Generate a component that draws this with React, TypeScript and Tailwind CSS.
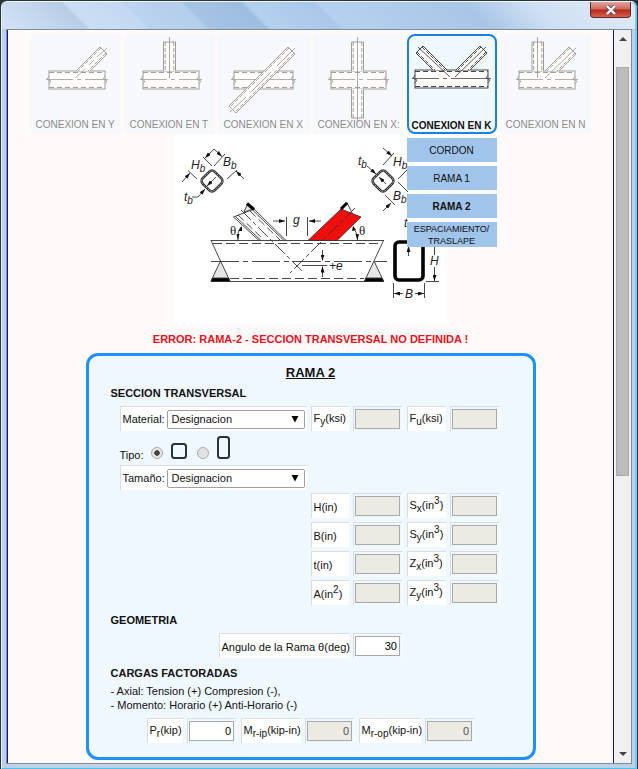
import React from "react";

type Kind = "Y" | "T" | "X" | "XX" | "K" | "N";

/* One member of a joint: two walls, dashed inner faces and an end cap. */
function Member({ a, b, c, d }: { a: number[]; b: number[]; c: number[]; d: number[] }) {
  // a-b is the first wall, c-d the second one, a and c are at the free end
  const mix = (p: number[], q: number[], t: number) => [p[0] + (q[0] - p[0]) * t, p[1] + (q[1] - p[1]) * t];
  const a2 = mix(a, c, 0.14);
  const c2 = mix(c, a, 0.14);
  const b2 = mix(b, d, 0.14);
  const d2 = mix(d, b, 0.14);
  const pts = (p: number[], q: number[]) => ({ x1: p[0], y1: p[1], x2: q[0], y2: q[1] });
  return (
    <g>
      <polygon points={[a, b, d, c].map((p) => p.join(",")).join(" ")} fill="#fffefa" stroke="none" />
      <line {...pts(a, b)} />
      <line {...pts(c, d)} />
      <line {...pts(a, c)} />
      <line {...pts(a2, b2)} strokeDasharray="4 2" />
      <line {...pts(c2, d2)} strokeDasharray="4 2" />
    </g>
  );
}

function Chord({ x1, x2 }: { x1: number; x2: number }) {
  return (
    <g>
      <rect x={x1} y={36} width={x2 - x1} height={18} fill="#fffefa" />
      <path d={`M${x1} 37.500H${x2}M${x1} 52.500H${x2}`} strokeDasharray="5 3" />
      <path d={`M${x1 - 3} 44.500H${x1 + 24}M${x1 + 28} 44.500h4M${x1 + 36} 44.500H${x2 + 3}`} strokeWidth="0.8" />
      <path d={`M${x1} 41l-2 3l4 2l-2 3M${x2} 41l-2 3l4 2l-2 3`} strokeWidth="0.8" />
    </g>
  );
}

function JointIcon({ kind }: { kind: Kind }) {
  return (
    <svg viewBox="2 2 86 86" className="block h-[86px] w-full" fill="none" stroke="#444" strokeWidth="1" aria-hidden="true">
      {kind === "Y" && (
        <>
          <Chord x1={18} x2={74} />
          <Member a={[69, 12]} b={[45, 36]} c={[76, 19]} d={[59, 36]} />
          <path d="M44 43L54 34M58 30l5-5M66 22l10-9" strokeWidth="0.8" />
        </>
      )}
      {kind === "T" && (
        <>
          <Chord x1={18} x2={74} />
          <Member a={[38.5, 7]} b={[38.5, 36]} c={[50.5, 7]} d={[50.5, 36]} />
          <path d="M44.5 2V43" strokeWidth="0.9" />
        </>
      )}
      {kind === "X" && (
        <>
          <Chord x1={15} x2={74} />
          <Member a={[69, 12]} b={[10, 71]} c={[76, 19]} d={[17, 78]} />
          <path d="M10 71L17 78M76 13L58 31M52 37L32 57M27 62l-16 15" strokeWidth="0.9" />
        </>
      )}
      {kind === "XX" && (
        <>
          <Chord x1={18} x2={73} />
          <Member a={[38.5, 7]} b={[38.5, 36]} c={[50.5, 7]} d={[50.5, 36]} />
          <Member a={[38.5, 83]} b={[38.5, 54]} c={[50.5, 83]} d={[50.5, 54]} />
          <path d="M44.5 2V86" strokeWidth="0.9" />
        </>
      )}
      {kind === "K" && (
        <>
          <Chord x1={8} x2={81} />
          <Member a={[16, 12]} b={[40, 36]} c={[9, 19]} d={[26, 36]} />
          <Member a={[73, 12]} b={[49, 36]} c={[80, 19]} d={[63, 36]} />
          <path d="M11 13L43 43M79 13L48 43" strokeWidth="0.9" />
        </>
      )}
      {kind === "N" && (
        <>
          <Chord x1={18} x2={74} />
          <Member a={[31, 7]} b={[31, 36]} c={[42.5, 7]} d={[42.5, 36]} />
          <Member a={[68, 12]} b={[44, 36]} c={[75, 19]} d={[58, 36]} />
          <path d="M36.5 2V43M75 13L44 43" strokeWidth="0.9" />
        </>
      )}
    </svg>
  );
}

function Sym({ x, y, base, sub }: { x: number; y: number; base: string; sub?: string }) {
  return (
    <text x={x} y={y} fontSize="12" fontStyle="italic" fill="#222" stroke="none">
      {base}
      {sub && (
        <tspan dy="3" fontSize="10">
          {sub}
        </tspan>
      )}
    </text>
  );
}

function Diagram() {
  return (
    <svg
      viewBox="174 134 273 190"
      className="block h-[190px] w-[273px] bg-white font-['Liberation_Sans',Arial,sans-serif]"
      fill="none"
      stroke="#333"
      strokeWidth="0.9"
      role="img"
      aria-label="Conexion en K"
    >
      <defs>
        <marker id="tip" viewBox="0 0 6 4" refX="6" refY="2" markerWidth="6" markerHeight="4" markerUnits="userSpaceOnUse" orient="auto">
          <path d="M0 0L6 2L0 4Z" fill="#111" stroke="none" />
        </marker>
      </defs>

      {/* chord */}
      <path d="M211 240.5H384M211 281.5H384M211 240.5L220.5 261M383.5 240.5L374 261" />
      <path d="M213 243.5H382M230 278.5H364" strokeDasharray="9 4" />
      <path d="M211 261.5H387" strokeDasharray="28 4 5 4" />
      <path d="M220.5 261L211 281H230ZM374 261L364.500 281H383.500Z" fill="#e6e6e6" />
      <path d="M212.500 278H228.500L230 281.500H211ZM366 278H382L383.500 281.500H364.500Z" fill="#000" />

      {/* left branch */}
      <path d="M233.500 217L259 240.500M235.500 216.500L261 240.500M254 209L286 240.500M252.500 210L284 240.500M233.500 217L254 209" />
      <path d="M238 215L264 240M250 211L280 240" strokeDasharray="8 4" />
      <path d="M241 210L304 273" strokeDasharray="14 3 4 3" />
      <path d="M244 212L248 203L253.500 209Z" fill="#e6e6e6" />
      <path d="M247 203.500L254 209.500" stroke="#000" strokeWidth="3" />

      {/* right branch */}
      <path d="M308 240.500L341 209L361 217L337 240.500Z" fill="#f40d0d" />
      <path d="M355 208L290 273" strokeDasharray="14 3 4 3" />
      <path d="M341 209L347 202.500L352 213" />
      <path d="M341 209L347 203" stroke="#000" strokeWidth="3" />

      {/* angles */}
      <path d="M238 240Q237 232 241 227M357.500 240Q357 232 353 227" />
      <path d="M236.500 234L238 240L239.500 234ZM355.500 234L357.500 240L359 234ZM238.500 231L242 226L242 231ZM352 231L353 226L356 230Z" fill="#111" stroke="none" />
      <text x="230" y="235" fontSize="13" fill="#222" stroke="none" className="font-['Liberation_Serif',serif]">θ</text>
      <text x="359" y="235" fontSize="13" fill="#222" stroke="none" className="font-['Liberation_Serif',serif]">θ</text>

      {/* gap and eccentricity */}
      <path d="M286.500 217V236M307.500 217V236" />
      <path d="M273 221H285" markerEnd="url(#tip)" />
      <path d="M321 221H309" markerEnd="url(#tip)" />
      <Sym x={293} y={224} base="g" />
      <path d="M302 265.500H327" />
      <path d="M322.500 250V260.500" markerEnd="url(#tip)" />
      <path d="M322.500 277V266.500" markerEnd="url(#tip)" />
      <Sym x={329} y={270} base="+e" />

      {/* branch section, left */}
      <rect x="203.500" y="172.500" width="17" height="17" rx="4" transform="rotate(45 212 181)" stroke="#333" strokeWidth="2.600" />
      <rect x="203.500" y="172.500" width="17" height="17" rx="4" transform="rotate(45 212 181)" stroke="#bbb" strokeWidth="0.800" strokeDasharray="2 1" />
      <path d="M188 170.500L197 179M203 157L212 166M214 166L225 154M227 179L237 170" />
      <path d="M182 182L190 173" markerEnd="url(#tip)" />
      <path d="M214 149L205 158" markerEnd="url(#tip)" />
      <path d="M214 149L222 156.500" markerEnd="url(#tip)" />
      <path d="M244 179L236 171" markerEnd="url(#tip)" />
      <path d="M192 197H198L205 189" markerEnd="url(#tip)" />
      <path d="M216 177L207 186" markerEnd="url(#tip)" />
      <Sym x={191} y={169} base="H" sub="b" />
      <Sym x={223} y={166} base="B" sub="b" />
      <Sym x={184} y={201} base="t" sub="b" />

      {/* branch section, right */}
      <rect x="374.500" y="172.500" width="17" height="17" rx="4" transform="rotate(45 383 181)" stroke="#333" strokeWidth="2.600" />
      <rect x="374.500" y="172.500" width="17" height="17" rx="4" transform="rotate(45 383 181)" stroke="#bbb" strokeWidth="0.800" strokeDasharray="2 1" />
      <path d="M394 153L383 165M408 169L398 179M398 182L408 192M385 195L395 205" />
      <path d="M383 148L392 156" markerEnd="url(#tip)" />
      <path d="M383 211L391 203" markerEnd="url(#tip)" />
      <path d="M367 166L376 174" markerEnd="url(#tip)" />
      <path d="M386 184L379 177" markerEnd="url(#tip)" />
      <Sym x={393} y={166} base="H" sub="b" />
      <Sym x={393} y={200} base="B" sub="b" />
      <Sym x={358} y={165} base="t" sub="b" />

      {/* chord section */}
      <rect x="395" y="242" width="28" height="38" rx="4" stroke="#000" strokeWidth="3.600" />
      <path d="M426 281.500H439M393.500 283V298M424.500 283V298" />
      <path d="M408.500 256V246" markerEnd="url(#tip)" />
      <path d="M434.500 255V241" />
      <path d="M434.500 267V281" markerEnd="url(#tip)" />
      <path d="M403 293.500H394" markerEnd="url(#tip)" />
      <path d="M415 293.500H424" markerEnd="url(#tip)" />
      <Sym x={404} y={227} base="t" />
      <Sym x={430} y={265} base="H" />
      <Sym x={405} y={298} base="B" />
    </svg>
  );
}

const joints: { kind: Kind; label: string }[] = [
  { kind: "Y", label: "CONEXION EN Y" },
  { kind: "T", label: "CONEXION EN T" },
  { kind: "X", label: "CONEXION EN X" },
  { kind: "XX", label: "CONEXION EN X:" },
  { kind: "K", label: "CONEXION EN K" },
  { kind: "N", label: "CONEXION EN N" },
];

function JointMenu() {
  return (
    <nav className="flex justify-center gap-1 pt-1">
      {joints.map(({ kind, label }) =>
        kind === "K" ? (
          <div key={kind} className="relative w-[90px]">
            <button type="button" className="block h-[100px] w-full overflow-hidden rounded-lg border-2 border-[#1a80e0] bg-[#f0f8ff] text-left font-bold">
              <JointIcon kind={kind} />
              <span className="-mt-0.5 block pl-[3px] leading-3 whitespace-nowrap">{label}</span>
            </button>
            <div className="absolute top-full left-0 mt-1 flex w-full flex-col gap-1">
              <button type="button" className="h-6 bg-[#a0c4ea]">CORDON</button>
              <button type="button" className="h-6 bg-[#a0c4ea]">RAMA 1</button>
              <button type="button" className="h-6 bg-[#a0c4ea] font-bold">RAMA 2</button>
              <button type="button" className="h-[25px] bg-[#a0c4ea] text-[9px] leading-3">
                ESPACIAMIENTO/
                <br />
                TRASLAPE
              </button>
            </div>
          </div>
        ) : (
          <button
            key={kind}
            type="button"
            className="block h-[100px] w-[90px] overflow-hidden border-2 border-transparent bg-[#f0f8ff] text-left opacity-50"
          >
            <JointIcon kind={kind} />
            <span className="-mt-1 block pl-[3px] leading-3 whitespace-nowrap">{label}</span>
          </button>
        ),
      )}
    </nav>
  );
}

const edge = "border-t border-l border-[#d9dde2]";

function Label({ id, indexed = false, children }: { id: string; indexed?: boolean; children: React.ReactNode }) {
  return (
    <label
      htmlFor={id}
      className={`${edge} block h-[25px] bg-white pl-0.5 whitespace-nowrap ${indexed ? "leading-[22px]" : "leading-[26px]"}`}
    >
      {children}
    </label>
  );
}

function Field({ id, value = "", disabled = false }: { id: string; value?: string; disabled?: boolean }) {
  return (
    <div className={`${edge} flex h-[25px] w-[50px] items-center justify-center border-r border-r-white`}>
      <input
        id={id}
        type="text"
        defaultValue={value}
        disabled={disabled}
        className="h-5 w-[45px] border border-[#a9a9a9] bg-white px-0.5 text-right text-black disabled:bg-[#ebebe4] disabled:text-[#545454]"
      />
    </div>
  );
}

function Picker({ id, label }: { id: string; label: string }) {
  return (
    <div className={`${edge} flex h-[25px] w-[187px] items-center gap-1 bg-white pl-0.5`}>
      <label htmlFor={id} className="w-10 whitespace-nowrap">{label}</label>
      <div className="relative">
        <select id={id} className="block h-[19px] w-[138px] appearance-none rounded-xs border border-[#a0a0a0] bg-white pl-1 leading-4">
          <option>Designacion</option>
        </select>
        <svg viewBox="0 0 8 8" className="pointer-events-none absolute top-[5px] right-1.5 size-2" aria-hidden="true">
          <path d="M0.500 1H7.500L4 7.500Z" fill="#000" />
        </svg>
      </div>
    </div>
  );
}

const Sub = ({ children }: { children: string }) => <sub className="text-[10px]">{children}</sub>;
const Sup = ({ children }: { children: string }) => <sup className="text-[10px]">{children}</sup>;

const radio =
  "size-3 appearance-none rounded-full border border-[#aaa] bg-[#e2e2e2] checked:bg-[radial-gradient(circle,#444_0_2.5px,#e6e6e6_3px)]";

function BranchForm() {
  return (
    <form className="mx-auto mt-1.5 w-[450px] rounded-xl border-3 border-[#1e90ff] bg-[#f0f8ff] px-[22px] pt-2 pb-3.5">
      <h1 className="text-center text-[13px] leading-[18px] font-bold underline">RAMA 2</h1>

      <h2 className="mt-1 leading-3.5 font-bold">SECCION TRANSVERSAL</h2>
      <div className="mt-1.5 ml-[9px] flex gap-1">
        <Picker id="material" label="Material:" />
        <div className="grid grid-cols-[38px_50px_39px_50px] gap-1">
          <Label id="fy" indexed>F<Sub>y</Sub>(ksi)</Label>
          <Field id="fy" disabled />
          <Label id="fu" indexed>F<Sub>u</Sub>(ksi)</Label>
          <Field id="fu" disabled />
        </div>
      </div>

      <div role="radiogroup" aria-label="Tipo" className="ml-[9px] flex h-[34px] items-end pb-1.5">
        <span className="leading-2">Tipo:</span>
        <label className="ml-[7px] flex items-end gap-2">
          <input type="radio" name="tipo" defaultChecked aria-label="Cuadrada" className={radio} />
          <svg viewBox="0 0 16 16" className="size-4" aria-hidden="true">
            <rect x="1" y="1" width="14" height="14" rx="2.500" fill="none" stroke="#2b3038" strokeWidth="2" />
          </svg>
        </label>
        <label className="ml-2.5 flex items-end gap-2">
          <input type="radio" name="tipo" aria-label="Rectangular" className={radio} />
          <svg viewBox="0 0 13 23" className="h-[23px] w-[13px]" aria-hidden="true">
            <rect x="1" y="1" width="11" height="21" rx="2.500" fill="none" stroke="#2b3038" strokeWidth="2" />
          </svg>
        </label>
      </div>

      <div className="ml-[9px]">
        <Picker id="tamano" label="Tamaño:" />
      </div>

      <div className="mt-[3px] ml-[200px] grid grid-cols-[38px_50px_39px_50px] gap-1">
        <Label id="h">H(in)</Label>
        <Field id="h" disabled />
        <Label id="sx" indexed>S<Sub>x</Sub>(in<Sup>3</Sup>)</Label>
        <Field id="sx" disabled />
        <Label id="b">B(in)</Label>
        <Field id="b" disabled />
        <Label id="sy" indexed>S<Sub>y</Sub>(in<Sup>3</Sup>)</Label>
        <Field id="sy" disabled />
        <Label id="t">t(in)</Label>
        <Field id="t" disabled />
        <Label id="zx" indexed>Z<Sub>x</Sub>(in<Sup>3</Sup>)</Label>
        <Field id="zx" disabled />
        <Label id="a">A(in<Sup>2</Sup>)</Label>
        <Field id="a" disabled />
        <Label id="zy" indexed>Z<Sub>y</Sub>(in<Sup>3</Sup>)</Label>
        <Field id="zy" disabled />
      </div>

      <h2 className="mt-2 leading-3.5 font-bold">GEOMETRIA</h2>
      <div className="mt-1.5 flex justify-center gap-1">
        <div className="w-[130px]">
          <Label id="angulo">Angulo de la Rama θ(deg)</Label>
        </div>
        <Field id="angulo" value="30" />
      </div>

      <h2 className="mt-2 leading-3.5 font-bold">CARGAS FACTORADAS</h2>
      <p className="mt-1 leading-3.5">
        - Axial: Tension (+) Compresion (-),
        <br />- Momento: Horario (+) Anti-Horario (-)
      </p>
      <div className="mt-1.5 grid grid-cols-[36px_50px_60px_50px_62px_50px] justify-center gap-1">
        <Label id="pr" indexed>P<Sub>r</Sub>(kip)</Label>
        <Field id="pr" value="0" />
        <Label id="mip" indexed>M<Sub>r-ip</Sub>(kip-in)</Label>
        <Field id="mip" value="0" disabled />
        <Label id="mop" indexed>M<Sub>r-op</Sub>(kip-in)</Label>
        <Field id="mop" value="0" disabled />
      </div>
    </form>
  );
}

export default function App() {
  return (
    <div className="flex min-h-screen flex-col bg-[#2c343c] px-px pt-px font-['Liberation_Sans',Arial,sans-serif] text-[11px] text-[#111]">
      <div className="flex flex-1 flex-col rounded-t-md border-t border-r-2 border-b border-l border-t-[#eef5fc] border-r-[#6fcdf0] border-b-[#4cc4ea] border-l-[#e8f1fa] bg-[#bcd0ea]">
        <header className="flex h-[27px] items-start justify-end rounded-t-md bg-[linear-gradient(45deg,#d3e2f3_0%,#b8cee7_13%,#cbdef3_13.5%,#c3d9f1_22%,#bad3ee_22.5%,#b4cfeb_31%,#a6c4e4_31.5%,#9dbde0_40%,#b4d1ef_41%,#a9c7e8_51%,#b6d1ef_52%,#a9c6e6_74%,#cfe0f3_84%,#e0eaf6_100%)] pr-1">
          <button
            type="button"
            aria-label="Cerrar"
            className="flex h-4 w-[41px] items-center justify-center rounded-b-sm border border-t-0 border-[#5a2a30] bg-[linear-gradient(#e0a49c_0%,#d0685c_48%,#b5281c_52%,#d8604c_100%)]"
          >
            <svg viewBox="0 0 12 10" className="h-2.5 w-3" aria-hidden="true">
              <path d="M2 1L10 9M10 1L2 9" stroke="#5a4a55" strokeWidth="4" />
              <path d="M2 1L10 9M10 1L2 9" stroke="#fff" strokeWidth="2.400" />
            </svg>
          </button>
        </header>

        <div className="mr-[3px] mb-1 ml-1 flex flex-1 border border-[#7d8c9e]">
          <main className="flex-1 border-x border-[#1414a0] bg-[#fffafa] pb-0.5 text-[10px]">
            <JointMenu />
            <div className="flex justify-center">
              <Diagram />
            </div>
            <div className="text-[11px]">
              <p role="alert" className="mt-2 text-center leading-[15px] font-bold text-[#ea1020]">
                ERROR: RAMA-2 - SECCION TRANSVERSAL NO DEFINIDA !
              </p>
              <BranchForm />
            </div>
          </main>

          <div className="flex w-[17px] flex-col items-center bg-[#f0f0f0]" aria-hidden="true">
            <svg viewBox="0 0 8 4" className="mt-[7px] h-1 w-2">
              <path d="M0 4L4 0L8 4Z" fill="#444" />
            </svg>
            <div className="mt-[26px] w-[13px] flex-[408] border border-[#aaa] bg-[#bcbcbc]" />
            <div className="flex-[277]" />
            <svg viewBox="0 0 8 4" className="mb-[7px] h-1 w-2">
              <path d="M0 0H8L4 4Z" fill="#444" />
            </svg>
          </div>
        </div>
      </div>
    </div>
  );
}
